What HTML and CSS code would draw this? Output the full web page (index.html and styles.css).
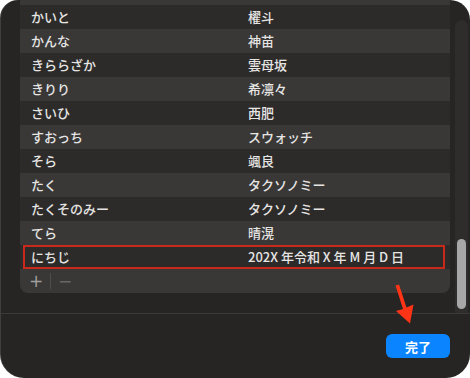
FILE: index.html
```html
<!DOCTYPE html>
<html lang="ja">
<head>
  <meta charset="UTF-8">
  <title>ユーザ辞書</title>
  <link rel="stylesheet" href="styles.css">
</head>
<body>
  <div class="sheet">
    <div class="sheet-body">
      <div class="dict">
        <div class="dict-rows">
          <div class="dict-row dict-row-cut"><span></span><span></span></div>
          <div class="dict-row"><span>かいと</span><span>櫂斗</span></div>
          <div class="dict-row"><span>かんな</span><span>神苗</span></div>
          <div class="dict-row"><span>きららざか</span><span>雲母坂</span></div>
          <div class="dict-row"><span>きりり</span><span>希凛々</span></div>
          <div class="dict-row"><span>さいひ</span><span>西肥</span></div>
          <div class="dict-row"><span>すおっち</span><span>スウォッチ</span></div>
          <div class="dict-row"><span>そら</span><span>颯良</span></div>
          <div class="dict-row"><span>たく</span><span>タクソノミー</span></div>
          <div class="dict-row"><span>たくそのみー</span><span>タクソノミー</span></div>
          <div class="dict-row"><span>てら</span><span>晴滉</span></div>
          <div class="dict-row is-selected"><span>にちじ</span><span>202X 年令和 X 年 M 月 D 日</span></div>
        </div>
        <div class="dict-footer">
          <span class="dict-btn">+</span>
          <span class="dict-sep"></span>
          <span class="dict-btn is-disabled">&minus;</span>
        </div>
      </div>
      <div class="scroll-track">
        <div class="scroll-thumb"></div>
      </div>
    </div>
    <div class="sheet-actions">
      <button class="btn-done">完了</button>
    </div>
    <svg class="callout" width="470" height="378" viewBox="0 0 470 378">
      <polygon points="395.5,285.5 399,284.5 406.5,307.5 413.5,304.5 410,323.5 396,311 403,309" fill="#ff3417"/>
    </svg>
  </div>
</body>
</html>
```

FILE: styles.css
```css
html, body {
  margin: 0;
  background: #ffffff;
}
.sheet {
  position: relative;
  width: 470px; height: 378px;
  background-color: #262524;
  border-radius: 18px 20px 24px 24px;
  overflow: hidden;
  box-shadow: inset 1px 0 0 rgba(255,255,255,0.12);
  font-family: "Noto Sans CJK JP", "Noto Sans", sans-serif;
  font-size: 13px;
  font-weight: 500;
  color: #e6e5e4;
}
.sheet-body {
  display: flex;
  height: 313px;
  border-bottom: 1px solid #3b3a39;
}
.dict {
  margin-left: 20px;
  width: 430px;
  align-self: flex-start;
  margin-top: -19px;
  border-radius: 0 0 8px 8px;
  overflow: hidden;
  background-color: #393837;
}
.dict-row {
  position: relative;
  display: grid;
  grid-template-columns: 217px 1fr;
  height: 24px;
  line-height: 24px;
  padding-left: 11px;
  background-color: #393837;
}
.dict-row:nth-child(even) {
  background-color: #2c2b2a;
}
.dict-row.is-selected::after {
  content: '';
  position: absolute;
  top: 0; bottom: 0; left: 3px; right: 5px;
  border: 2px solid #c8291a;
}
.dict-footer {
  display: flex;
  align-items: center;
  height: 24px;
  padding-left: 6px;
  color: #a09f9e;
}
.dict-btn {
  width: 20px;
  text-align: center;
  font-size: 17px;
  line-height: 24px;
  font-family: "DejaVu Sans", sans-serif;
  font-weight: 400;
}
.dict-btn.is-disabled {
  color: #686766;
}
.dict-sep {
  width: 1px; height: 16px;
  margin: 0 4px;
  background-color: #4e4d4c;
}
.scroll-track {
  margin: 20px 0 0 5px;
  width: 13px;
  border-radius: 7px 7px 0 0;
  background-color: #2e2d2c;
  display: flex;
  flex-direction: column;
  justify-content: flex-end;
  align-items: center;
  padding-bottom: 4px;
}
.scroll-thumb {
  width: 9px; height: 70px;
  border-radius: 5px;
  background-color: #a7a7a7;
}
.sheet-actions {
  display: flex;
  justify-content: flex-end;
  padding: 20px 20px 0 0;
}
.btn-done {
  width: 64px; height: 24px;
  border: 0;
  border-radius: 6px;
  background-color: #0a84ff;
  color: #ffffff;
  font-family: "Noto Sans CJK JP", sans-serif;
  font-size: 13px;
  font-weight: 700;
  padding: 0;
}
.callout {
  position: absolute;
  left: 0; top: 0;
  pointer-events: none;
}
```
